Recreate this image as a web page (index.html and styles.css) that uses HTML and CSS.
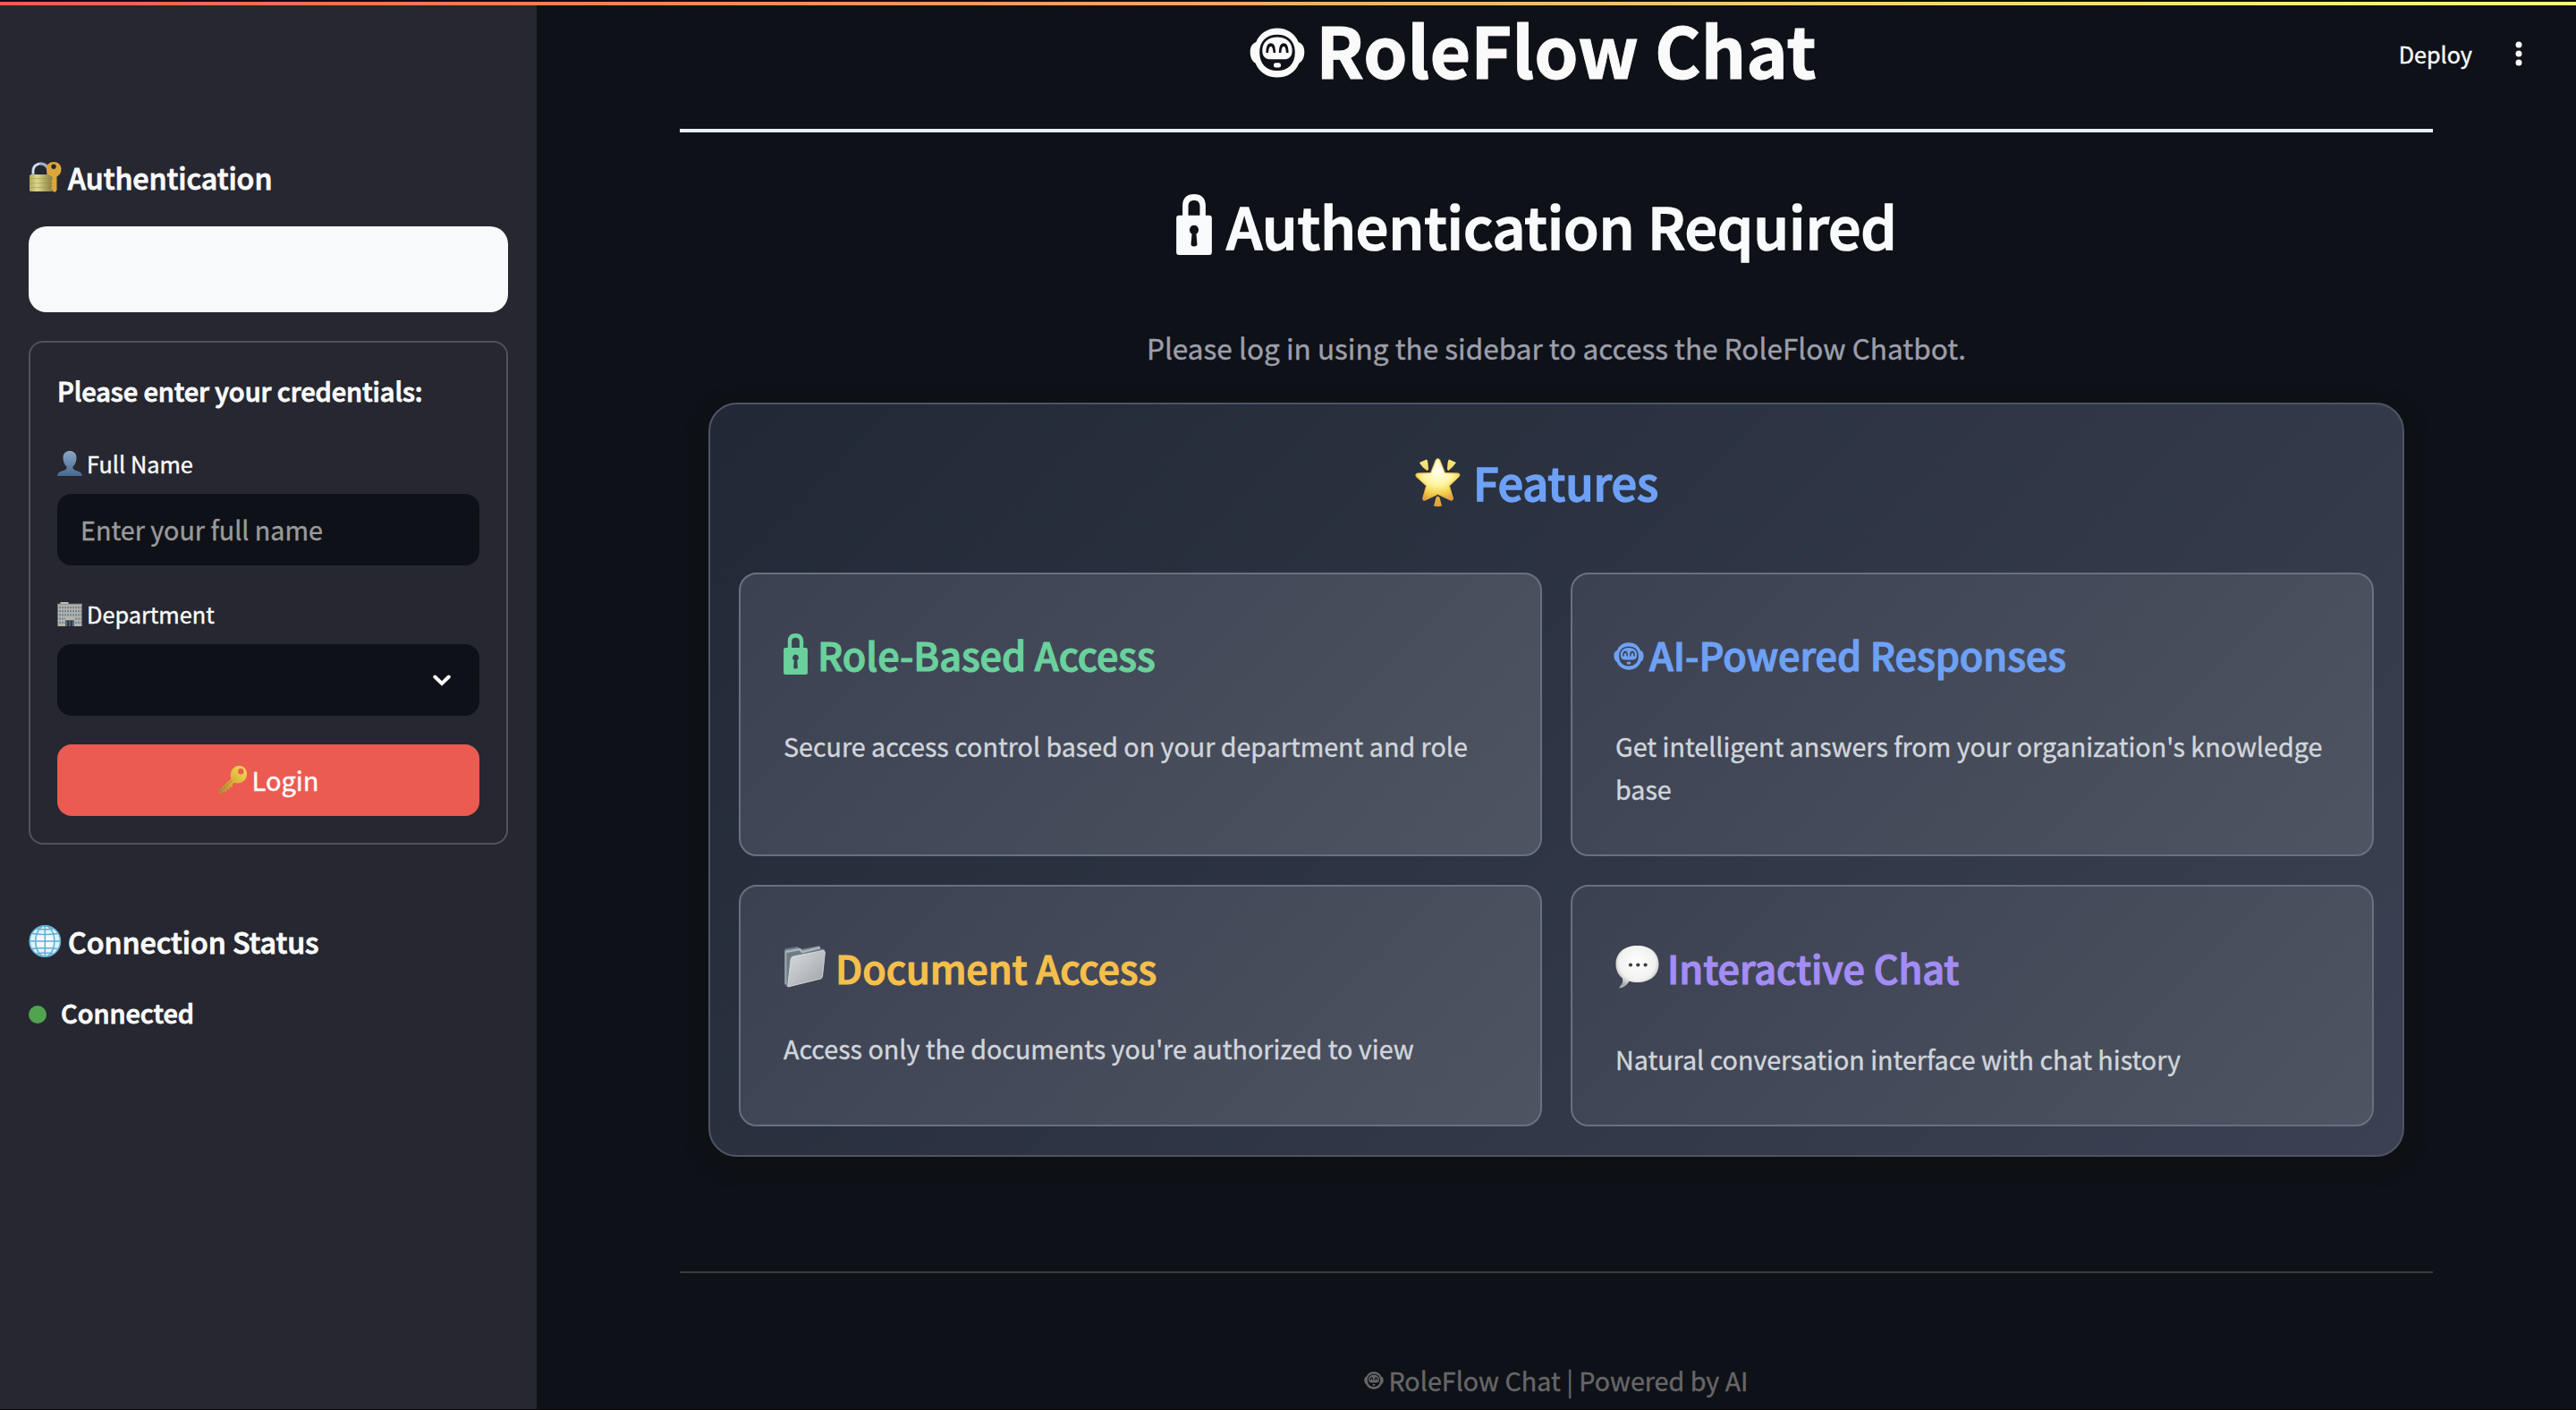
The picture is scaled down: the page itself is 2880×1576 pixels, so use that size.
FILE: index.html
```html
<!DOCTYPE html>
<html lang="en">
<head>
<meta charset="utf-8">
<title>RoleFlow Chat</title>
<link rel="stylesheet" href="styles.css">
</head>
<body>
<svg class="defs" aria-hidden="true">
  <symbol id="robot" viewBox="-31 -28 62 56">
    <path fill="currentColor" fill-rule="evenodd" d="M0-27.6C11-27.6 20-21.500 23.800-11.800C28-10.500 30.300-6.500 30.300-1C30.300 5 28.200 9.500 24.500 11.500C20.500 21.500 11.500 27.600 0 27.600S-20.500 21.500-24.500 11.500C-28.200 9.500-30.300 5-30.300-1C-30.300-6.500-28-10.500-23.800-11.800C-20-21.500-11-27.600 0-27.600ZM0-20.200C-12-20.200-19.800-13-19.800-.5C-19.800 12.500-12 20-0 20S19.800 12.500 19.800-.5C19.800-13 12-20.200 0-20.200Z"/>
    <path fill="currentColor" fill-rule="evenodd" d="M0-17.500C10-17.500 16.700-12 16.700-2.500C16.700 4 13.500 7.300 7 7.300H-7C-13.500 7.300-16.700 4-16.700-2.500C-16.700-12-10-17.500 0-17.500ZM-12.600 0H-10C-9.600-4.500-8.800-7-7.200-7S-4.800-4.500-4.400 0H-1.900C-2-7-3.500-10.800-7.200-10.800S-12.500-7-12.600 0ZM1.900 0H4.400C4.800-4.500 5.600-7 7.200-7S9.600-4.500 10 0H12.600C12.500-7 10.900-10.800 7.200-10.800S2-7 1.900 0Z"/>
    <rect x="-4" y="11.200" width="8" height="5.200" rx="2.200" fill="currentColor"/>
  </symbol>
  <symbol id="lock" viewBox="0 0 80 137">
    <path fill="currentColor" fill-rule="evenodd" d="M14 48V26C14 9 24 0 40 0S66 9 66 26V48H74Q80 48 80 54V131Q80 137 74 137H6Q0 137 0 131V54Q0 48 6 48ZM27 48H53V27C53 18 48 14 40 14S27 18 27 27ZM40 70A10.500 10.500 0 0 0 35 89.500L33 113Q33 118 40 118T47 113L45 89.500A10.500 10.500 0 0 0 40 70Z"/>
  </symbol>
</svg>

<div class="app">
  <aside class="sidebar">
    <h3 class="side-title auth-title">
      <svg width="43" height="44" viewBox="0 0 43 44">
        <defs>
          <linearGradient id="brass"><stop offset="0" stop-color="#b3a95a"/><stop offset=".3" stop-color="#dcd88e"/><stop offset=".65" stop-color="#aaa25c"/><stop offset="1" stop-color="#7d7440"/></linearGradient>
        </defs>
        <path d="M5 20V15.500C5 4 22 4 22 15.500V20" fill="none" stroke="#9fb0cc" stroke-width="3.200"/>
        <path d="M5 18V15C5.500 9 9 7.500 12 7" fill="none" stroke="#e3ebf5" stroke-width="1.600"/>
        <rect x="1" y="19" width="28" height="19" rx="1.500" fill="url(#brass)"/>
        <path d="M1.500 23.500H28M1.500 28.500H28M1.500 33.500H28" stroke="#938b4c" stroke-width=".7" opacity=".6"/>
        <path fill="#dda63a" fill-rule="evenodd" d="M28 5C33 5 36.500 8.500 36.500 13C36.500 17 34.500 20 31.500 21.500V36.500L29.500 39L27 37.500V36L25 34.500L26.500 32.500L25 30.500L26.500 28.500L25 26.500L26.500 24.500V21.500C22.500 20 20 17 20 13C20 8.500 23 5 28 5ZM28 7.500A2.700 2.700 0 1 0 28 12.900A2.700 2.700 0 1 0 28 7.500Z"/>
      </svg>
      <span>Authentication</span>
    </h3>
    <div class="auth-panel"></div>

    <form class="login-form">
      <p class="form-lead">Please enter your credentials:</p>
      <label class="field-label name-label">
        <svg width="33" height="40" viewBox="0 0 33 40">
          <defs><linearGradient id="bust" x2="0" y2="1"><stop offset="0" stop-color="#88a5c4"/><stop offset="1" stop-color="#486990"/></linearGradient></defs>
          <path fill="url(#bust)" d="M14 6C18.500 6 21.500 9 21.500 13.500C21.500 18 19.500 22 17.500 23.500C17.300 26 18 27 21 28C25.500 29.300 27.800 30.500 27.800 34H.2C.2 30.500 2.500 29.300 7 28C10 27 10.700 26 10.500 23.500C8.500 22 6.500 18 6.500 13.500C6.500 9 9.500 6 14 6Z"/>
        </svg>
        <span>Full Name</span>
      </label>
      <div class="control"><span class="placeholder">Enter your full name</span></div>
      <label class="field-label dept-label">
        <svg width="33" height="40" viewBox="0 0 33 40">
          <rect x="3.500" y="7" width="9" height="3" fill="#c5c3bc"/>
          <rect x=".5" y="9" width="27" height="25" fill="#b4b3ae"/>
          <path d="M0 9.300H28" stroke="#8e8d8a" stroke-width="1.200"/>
          <g stroke="#6c8294" stroke-width="2.300" stroke-dasharray="1.800 1.200"><path d="M2.200 13H27M2.200 17.200H27M2.200 21.400H27"/><path d="M2.200 25.600H9M2.200 29.800H9M20.200 25.600H27M20.200 29.800H27"/></g>
          <rect x="9" y="27" width="10" height="7" fill="#56646f"/>
          <path d="M12.300 28V34M15.700 28V34" stroke="#1c2a35" stroke-width="1.500"/>
        </svg>
        <span>Department</span>
      </label>
      <div class="control select">
        <svg width="20" height="14" viewBox="0 0 20 14"><path d="M2.300 3.500L10 11L17.700 3.500" fill="none" stroke="#fafafa" stroke-width="4" stroke-linecap="round"/></svg>
      </div>
      <button class="login" type="button">
        <svg width="38" height="48" viewBox="0 0 38 48">
          <defs><linearGradient id="gold" x1="1" y1="0" x2="0" y2="1"><stop offset="0" stop-color="#f7dc55"/><stop offset=".55" stop-color="#d9ae3a"/><stop offset="1" stop-color="#b08a34"/></linearGradient></defs>
          <path fill="url(#gold)" fill-rule="evenodd" d="M23 8C28 7.500 32 11.500 32 17C32 23 27.500 27.500 21 27.500L18 26.800L15.500 29.500L15.800 32L13 31.800L12.500 34.500L9.500 34.300L9 37L6 36.800L3 39.500L.5 39V35.800L14.300 22.500C12 15 16.500 8.500 23 8ZM25.300 11A3.200 3.200 0 1 0 25.300 17.400A3.200 3.200 0 1 0 25.300 11Z"/>
          <path d="M2 37L16 24" stroke="#8c6a25" stroke-width="1" opacity=".6"/>
        </svg>
        <span>Login</span>
      </button>
    </form>

    <h3 class="side-title status-title">
      <svg width="43" height="44" viewBox="0 0 43 44">
        <defs><radialGradient id="sea"><stop offset="0" stop-color="#ffffff"/><stop offset="1" stop-color="#d5edf7"/></radialGradient></defs>
        <circle cx="18.300" cy="22" r="17.400" fill="url(#sea)"/>
        <g fill="none" stroke="#62aed2" stroke-width="1.500"><circle cx="18.300" cy="22" r="17.200"/><ellipse cx="18.300" cy="22" rx="10.500" ry="17.200"/><path d="M18.300 5V39M1 22H35.600M4 13.500Q18.300 15.500 32.500 13.500M4 30.500Q18.300 28.500 32.500 30.500M9 8Q18.300 10 27.500 8M9 36Q18.300 34 27.500 36"/></g>
      </svg>
      <span>Connection Status</span>
    </h3>
    <p class="status"><i class="dot"></i><span>Connected</span></p>
  </aside>

  <main class="main">
    <div class="content">
      <h1 class="page-title">
        <svg class="robot" width="62" height="56"><use href="#robot"/></svg>
        <span>RoleFlow Chat</span>
      </h1>
      <h2 class="required">
        <svg class="lock" width="40" height="68"><use href="#lock"/></svg>
        <span>Authentication Required</span>
      </h2>
      <p class="lead">Please log in using the sidebar to access the RoleFlow Chatbot.</p>

      <section class="features">
        <h3 class="features-title">
          <svg width="65" height="64" viewBox="0 0 65 64">
            <defs>
              <radialGradient id="star" cx=".5" cy=".3" r=".75"><stop offset="0" stop-color="#fffff4"/><stop offset=".45" stop-color="#fdf5a0"/><stop offset=".7" stop-color="#f4d552"/><stop offset="1" stop-color="#df9538"/></radialGradient>
              <linearGradient id="ray" x2="0" y2="1"><stop offset="0" stop-color="#f8e97a"/><stop offset="1" stop-color="#dfa038"/></linearGradient>
            </defs>
            <path d="M28 8.500L33.500 22.500L48.500 23Q51.500 24 49 27L38.500 37L42.500 51Q42.500 54 39.500 53L25.500 46.500L11.500 53Q8.500 54 8.700 51L12.500 37L1.500 27Q-.5 24 2.500 23L17.500 22.500L23 8.500Q25.500 4.500 28 8.500Z" fill="url(#star)" stroke="#e3a945" stroke-width="1"/>
            <path d="M5 11L13 7.500Q14.500 8 15 19L13.500 20Q7 15.500 5 11ZM46 11L38 7.500Q36.500 8 36 19L37.500 20Q43 15.500 46 11ZM23.500 50Q25.500 47.500 27.500 50L30 59.500Q25.500 61 21 59.500Z" fill="url(#ray)"/>
          </svg>
          <span>Features</span>
        </h3>
        <div class="grid">
          <article class="card">
            <h4 class="green"><svg class="lock-sm" width="27" height="46"><use href="#lock"/></svg><span>Role-Based Access</span></h4>
            <p>Secure access control based on your department and role</p>
          </article>
          <article class="card">
            <h4 class="blue"><svg class="robot-sm" width="34" height="31"><use href="#robot"/></svg><span>AI-Powered Responses</span></h4>
            <p>Get intelligent answers from your organization's knowledge base</p>
          </article>
          <article class="card low compact">
            <h4 class="yellow">
              <svg width="58" height="56" viewBox="0 0 58 56">
                <defs><linearGradient id="folder" x2="1" y2="1"><stop offset="0" stop-color="#d9dde0"/><stop offset="1" stop-color="#9fa1a6"/></linearGradient></defs>
                <path d="M1 10Q1 7 4 7L16 5L19 8L40 4V7L46 8L43 41L4 50L1 47Z" fill="#6f7c85"/>
                <path d="M2 11L18 8L21 11L41 6" fill="none" stroke="#aab6bd" stroke-width="2.500"/>
                <path d="M2.500 11V47" stroke="#9aa5ac" stroke-width="2"/>
                <path d="M8 20Q8 17 11 16L44 9.500Q46.500 9.500 46.300 12L43.500 38Q43 40.500 41 41L5 50Q4.500 49 5 47Z" fill="url(#folder)" stroke="#d3d7d9" stroke-width="1"/>
              </svg>
              <span>Document Access</span></h4>
            <p>Access only the documents you're authorized to view</p>
          </article>
          <article class="card low">
            <h4 class="purple">
              <svg width="58" height="56" viewBox="0 0 58 56">
                <defs><radialGradient id="bubble" cx=".5" cy=".4" r=".6"><stop offset="0" stop-color="#ffffff"/><stop offset=".7" stop-color="#f1f1f0"/><stop offset="1" stop-color="#a9a9a9"/></radialGradient></defs>
                <path d="M24.500 4C39 4 48.500 12 48.500 24.500S39 45 24.500 45C21 45 18 44.600 15.500 43.800C13 48 9.500 51 4.500 51.500Q4 50.500 5.500 49C8 46.500 8.500 44 8 40.500C3 36.500 .5 31 .5 24.500C.5 12 10 4 24.500 4Z" fill="url(#bubble)"/>
                <g fill="#3e3e40"><circle cx="17" cy="25.500" r="2.100"/><circle cx="25.300" cy="25.500" r="2.100"/><circle cx="33.600" cy="25.500" r="2.100"/></g>
              </svg>
              <span>Interactive Chat</span></h4>
            <p>Natural conversation interface with chat history</p>
          </article>
        </div>
      </section>

      <footer class="footer">
        <svg width="22" height="20"><use href="#robot"/></svg>
        <span>RoleFlow Chat | Powered by AI</span>
      </footer>
    </div>
  </main>
</div>

<div class="topbar"></div>
<div class="toolbar">
  <span>Deploy</span>
  <svg width="8" height="28" viewBox="0 0 8 28"><g fill="#fafafa"><circle cx="4" cy="4" r="3.500"/><circle cx="4" cy="14" r="3.500"/><circle cx="4" cy="24" r="3.500"/></g></svg>
</div>
<div class="bottom-edge"></div>
</body>
</html>
```
FILE: styles.css
```css
* { box-sizing: border-box; }
html, body { margin: 0; height: 100%; }
body {
  position: relative;
  overflow: hidden;
  background: #0e1117;
  color: #fafafa;
  font-family: "Noto Sans CJK JP", "Noto Sans", sans-serif;
  font-size: 28.7px;
  line-height: 48px;
  -webkit-text-stroke: .4px currentColor;
}
h1, h2, h3, h4, p { margin: 0; font-weight: 500; white-space: nowrap; }
svg { display: block; flex: none; overflow: visible; -webkit-text-stroke: 0; }
.defs { position: absolute; width: 0; height: 0; }

.app { display: flex; height: 1576px; }

/* Sidebar */
.sidebar {
  flex: none;
  width: 600px;
  padding: 176px 32px 0;
  background: #262730;
}
.side-title {
  display: flex;
  font-size: 32.2px;
  line-height: 44px;
  letter-spacing: -.04px;
  -webkit-text-stroke: .9px currentColor;
}
.side-title svg { margin-right: 1px; }
.auth-panel {
  height: 96px;
  margin-top: 33px;
  border-radius: 20px;
  background: #f8f9fb;
}
.login-form {
  margin-top: 32px;
  padding: 30px 30px;
  border: 2px solid #51525a;
  border-radius: 16px;
}
.form-lead {
  margin-top: -1px;
  font-size: 29px;
  letter-spacing: -.07px;
  -webkit-text-stroke: .9px currentColor;
}
.field-label {
  display: flex;
  font-size: 25.3px;
  line-height: 40px;
  -webkit-text-stroke: .4px currentColor;
}
.name-label { margin-top: 38px; }
.dept-label { margin-top: 34px; }
.control {
  display: flex;
  align-items: center;
  height: 80px;
  margin-top: 14px;
  padding: 0 26px;
  border-radius: 16px;
  background: #0e1117;
}
.placeholder { margin-top: -1px; color: #9a9a9c; font-size: 28.7px; }
.select { justify-content: flex-end; padding-right: 32px; }
.login {
  display: flex;
  align-items: center;
  justify-content: center;
  width: 100%;
  height: 80px;
  margin-top: 32px;
  padding: 0;
  border: 0;
  border-radius: 16px;
  background: #eb5b52;
  color: #fff;
  font: 400 29px/48px "Noto Sans CJK JP", "Noto Sans", sans-serif;
  -webkit-text-stroke: .4px currentColor;
}
.login span { margin-top: -2px; }
.login svg { margin-top: -1px; }
.status-title { margin-top: 86px; }
.status {
  display: flex;
  align-items: center;
  gap: 16px;
  margin-top: 33px;
  font-size: 28.9px;
  -webkit-text-stroke: .9px currentColor;
}
.dot { width: 20px; height: 20px; margin-top: 5px; border-radius: 50%; background: #52a350; }

/* Main column */
.main { flex: 1; padding: 0 160px; }
.page-title {
  display: flex;
  justify-content: center;
  height: 148px;
  padding: 4px 52px 0 0;
  border-bottom: 4px solid #e6f0f8;
  font-size: 78.9px;
  font-weight: 700;
  line-height: 100px;
  -webkit-text-stroke: 1px currentColor;
}
.robot { margin: 27px 12px 0 0; }
.required {
  display: flex;
  justify-content: center;
  margin-top: 59px;
  padding-right: 44px;
  color: #f9fafb;
  font-size: 64.4px;
  line-height: 88px;
  letter-spacing: -.12px;
  -webkit-text-stroke: 1.700px currentColor;
}
.lock { margin: 10px 16px 0 0; }
.lead {
  margin-top: 67px;
  color: #9c9eab;
  font-size: 31.57px;
  font-weight: 400;
  line-height: 52px;
  text-align: center;
}

.features {
  margin: 36px 32px 0;
  padding: 54px 32px 32px;
  border: 2px solid #4d5563;
  border-radius: 32px;
  background: linear-gradient(135deg, #212936, #3a4152);
  box-shadow: 0 8px 24px rgba(16, 16, 17, .7);
}
.features-title {
  display: flex;
  justify-content: center;
  padding-right: 44px;
  color: #6ea1f6;
  font-size: 50.6px;
  line-height: 64px;
  letter-spacing: -.15px;
  -webkit-text-stroke: 1.400px currentColor;
}
.grid {
  display: grid;
  grid-template-columns: 1fr 1fr;
  grid-template-rows: 317px 270px;
  gap: 32px;
  margin-top: 70px;
}
.card {
  padding: 61px 48px 0;
  border: 2px solid #6b7080;
  border-radius: 20px;
  background: linear-gradient(135deg, #3b4151, #4e5461);
}
.low { padding-top: 62px; }
.card h4 {
  display: flex;
  font-size: 43.2px;
  line-height: 56px;
  letter-spacing: -.05px;
  -webkit-text-stroke: 1.200px currentColor;
}
.card p {
  margin-top: 51px;
  color: #d1d5db;
  font-size: 28.66px;
  font-weight: 400;
  white-space: normal;
}
.compact p { margin-top: 39px; }
.lock-sm { margin: 5px 11px 0 0; }
.robot-sm { margin: 15px 6px 0 -2px; }
.green { color: #6ad19d; }
.blue { color: #6ea1f6; }
.yellow { color: #f4bf4b; }
.purple { color: #a48cf5; }

.footer {
  display: flex;
  align-items: center;
  justify-content: center;
  gap: 5px;
  height: 155px;
  margin-top: 128px;
  padding-top: 86px;
  border-top: 2px solid #3a3b40;
  color: #666667;
  font-size: 28.7px;
  white-space: nowrap;
}

/* Overlays on the window's edges */
.topbar {
  position: absolute;
  inset: 0 0 auto 0;
  height: 6px;
  border-top: 2px solid #0b0c10;
  background: linear-gradient(90deg, #ee5a52, #fffd80);
}
.toolbar {
  position: absolute;
  top: 36px;
  right: 60px;
  display: flex;
  align-items: center;
  gap: 48px;
  font-size: 25.2px;
}
.bottom-edge {
  position: absolute;
  inset: auto 0 0 0;
  height: 1px;
  background: #060609;
}
```
